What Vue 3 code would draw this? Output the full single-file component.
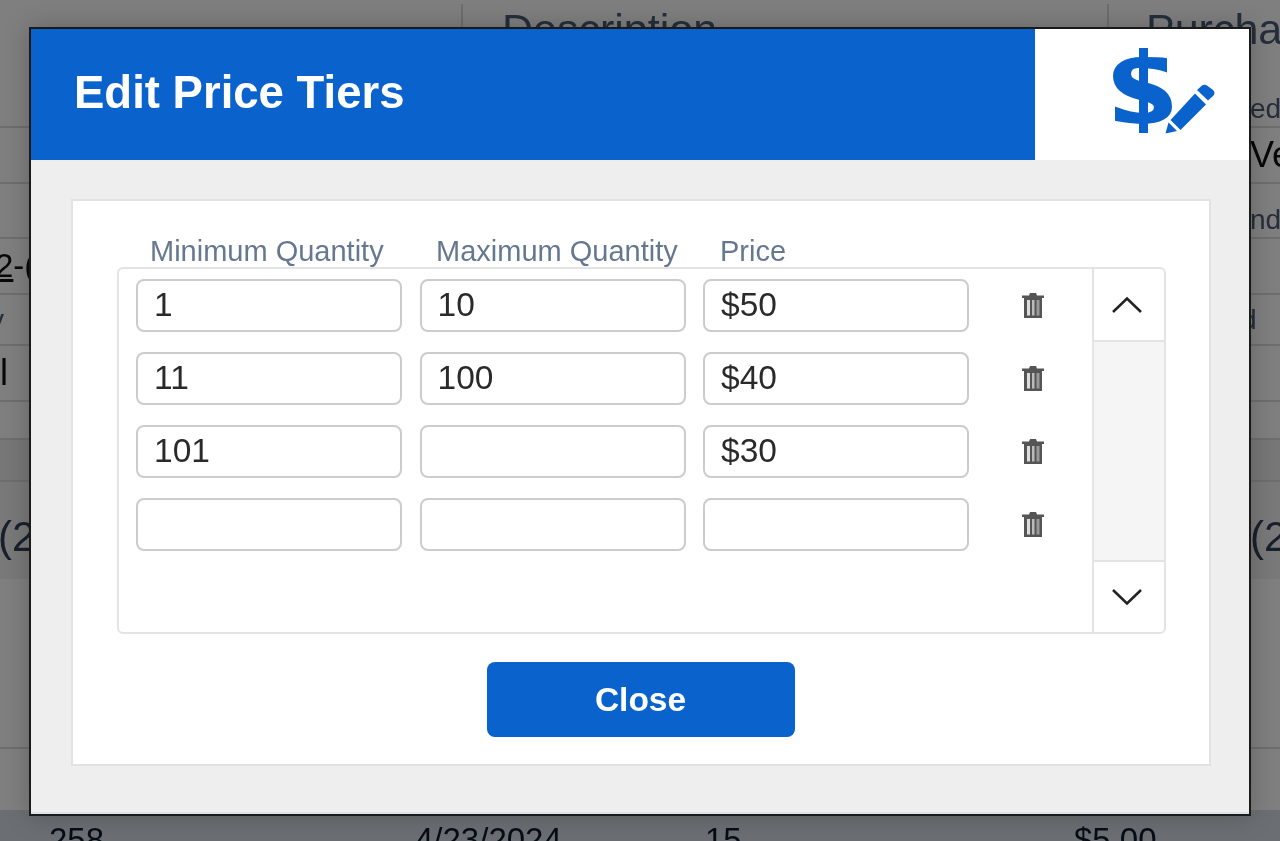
<template>
  <div class="page">
    <!-- page behind the dialog, mostly covered -->
    <div class="head-row">
      <span class="head-cell first"></span>
      <span class="head-cell">Description</span>
      <span class="head-cell last">
        Purcha
        <span class="sub ed">ed</span>
      </span>
    </div>
    <div class="row r56"><span class="dark right ve">Ve</span></div>
    <div class="row r55"><span class="sub right nd">nd</span></div>
    <div class="row r56"><span class="dark two"><u>2</u>-(</span></div>
    <div class="row r51">
      <span class="sub vee">v</span>
      <span class="sub right used">d</span>
    </div>
    <div class="row r56"><span class="dark bar">l</span></div>
    <div class="row r38"></div>
    <div class="row r41 shade"></div>
    <div class="row r97">
      <span class="big">(2</span>
      <span class="big right">(2</span>
    </div>
    <div class="row r170"></div>
    <div class="row r61"></div>
    <div class="foot-row">
      <span class="c1">258</span>
      <span class="c2">4/23/2024</span>
      <span class="c3">15</span>
      <span class="c4">$5.00</span>
    </div>

    <!-- dialog -->
    <div class="overlay"></div>
    <div class="modal">
      <div class="modal-head">
        <h1>Edit Price Tiers</h1>
        <div class="head-icon">
          <svg width="214" height="131" viewBox="1035 29 214 131">
            <path
              d="M1166 59 L1166 71 C1158 68 1148 67 1138 67 C1132 67 1130 70 1130 74 C1130 79 1135 81 1144 83 C1162 87 1171 94 1171 107 C1171 117 1160 123 1143 123 C1133 123 1122 121 1116 120 L1116 108 C1124 111 1135 114 1143 114 C1151 114 1155 111 1155 107 C1155 103 1150 101 1140 99 C1123 95 1114 88 1114 76 C1114 65 1125 58 1142 58 C1151 58 1160 58 1166 59 Z"
              fill="#0a62cc"
              stroke="#0a62cc"
              stroke-width="2"
            />
            <rect x="1139" y="48" width="9" height="85" fill="#0a62cc" />
            <path d="M1165.500 133.500 L1168.500 122.500 L1177 131 Z" fill="#0a62cc" />
            <path d="M1170.500 120 L1180.500 130 L1206 104.500 L1195 93.500 Z" fill="#0a62cc" />
            <path d="M1197 90 L1202 85.500 Q1204 84 1207 85.500 L1213 90 Q1216 93 1213 96 L1208 100.500 Z" fill="#0a62cc" />
          </svg>
        </div>
      </div>

      <div class="modal-body">
        <div class="card">
          <div class="labels">
            <span>Minimum Quantity</span>
            <span>Maximum Quantity</span>
            <span>Price</span>
          </div>

          <div class="tier-box">
            <div class="tier-list">
              <div v-for="(tier, i) in tiers" :key="i" class="tier">
                <input type="text" :value="tier.min" readonly />
                <input type="text" :value="tier.max" readonly />
                <input type="text" :value="tier.price" readonly />
                <svg class="trash" width="24" height="26" viewBox="0 0 24 26">
                  <path d="M1 3.500 H8 L9 1 H15 L16 3.500 H23 V6 H1 Z" fill="#555" />
                  <path d="M3 6 H21 V26 H3 Z" fill="#555" />
                  <rect x="6" y="8" width="3" height="15.500" fill="#ddd" />
                  <rect x="11" y="8" width="2.500" height="15.500" fill="#bbb" />
                  <rect x="15.500" y="8" width="3" height="15.500" fill="#999" />
                </svg>
              </div>
            </div>
            <div class="scroller">
              <div class="arrow up">
                <svg width="32" height="18" viewBox="0 0 32 18">
                  <path d="M2 16 L16 2.500 L30 16" fill="none" stroke="#222" stroke-width="2.500" />
                </svg>
              </div>
              <div class="track"></div>
              <div class="arrow down">
                <svg width="32" height="18" viewBox="0 0 32 18">
                  <path d="M2 2 L16 15.500 L30 2" fill="none" stroke="#222" stroke-width="2.500" />
                </svg>
              </div>
            </div>
          </div>

          <div class="actions">
            <button type="button">Close</button>
          </div>
        </div>
      </div>
    </div>
  </div>
</template>

<script setup>
const tiers = [
  { min: "1", max: "10", price: "$50" },
  { min: "11", max: "100", price: "$40" },
  { min: "101", max: "", price: "$30" },
  { min: "", max: "", price: "" },
];
</script>

<style>
html,
body {
  margin: 0;
  overflow: hidden;
}
</style>

<style scoped>
.page {
  position: relative;
  width: 1280px;
  height: 841px;
  overflow: hidden;
  background: #fff;
  font-family: "Liberation Sans", Arial, sans-serif;
  color: #111;
  filter: blur(0.45px);
}

.head-row {
  display: flex;
  box-sizing: border-box;
  height: 128px;
  border-bottom: 2px solid #ddd;
}

.head-cell {
  flex: none;
  height: 60px;
  margin-top: 4px;
  padding-left: 39px;
  border-right: 2px solid #ddd;
  font-size: 43px;
  line-height: 50px;
  color: #4a5d75;
  white-space: nowrap;
}

.head-cell.first {
  width: 422px;
}

.head-cell:nth-child(2) {
  width: 605px;
}

.head-cell.last {
  display: block;
  padding-left: 37px;
  border-right: none;
}

.ed {
  display: block;
  margin: 38px 0 0 104px;
  line-height: 34px;
}

.row {
  display: flex;
  box-sizing: border-box;
  border-bottom: 2px solid #ddd;
  align-items: center;
  white-space: nowrap;
}

.r56 {
  height: 56px;
}

.r55 {
  height: 55px;
}

.r51 {
  height: 51px;
}

.r38 {
  height: 38px;
}

.r41 {
  height: 42px;
}

.r97 {
  height: 97px;
  padding-top: 12px;
  background: #f3f3f3;
  border-bottom: none;
}

.r170 {
  height: 170px;
}

.r61 {
  height: 61px;
  border-bottom: none;
}

.shade {
  background: #eee;
}

.right {
  flex: none;
  width: 30px;
  margin-left: auto;
}

.sub {
  font-size: 28px;
  color: #4a5d75;
}

.dark {
  font-size: 33px;
  color: #111;
}

.ve {
  font-size: 36px;
}

.nd {
  padding-top: 18px;
}

.two {
  margin-left: -5px;
}

.vee {
  margin-left: -10px;
}

.used {
  width: 39px;
}

.bar {
  font-size: 36px;
}

.big {
  flex: none;
  font-size: 42px;
  color: #33415a;
  margin-left: -2px;
}

.big.right {
  margin-left: auto;
}

.foot-row {
  display: flex;
  height: 32px;
  background: #d6dee6;
  font-size: 33px;
  line-height: 60px;
  color: #0d1a2c;
  white-space: nowrap;
}

.c1 {
  flex: none;
  box-sizing: border-box;
  width: 415px;
  padding-left: 49px;
}

.c2 {
  flex: none;
  width: 290px;
}

.c3 {
  flex: none;
  width: 369px;
}

.overlay {
  position: absolute;
  inset: 0;
  background: rgba(0, 0, 0, 0.5);
}

.modal {
  position: absolute;
  left: 29px;
  top: 27px;
  width: 1222px;
  height: 789px;
  box-sizing: border-box;
  display: flex;
  flex-direction: column;
  border: 2px solid #1a1a1a;
  background: #eee;
  box-shadow: 0 0 24px rgba(0, 0, 0, 0.22);
}

.modal-head {
  display: flex;
  height: 131px;
  background: #0a62cc;
}

.modal-head h1 {
  flex: 1;
  margin: 0;
  padding-left: 43px;
  font-size: 45.500px;
  line-height: 128px;
  font-weight: 700;
  color: #fff;
}

.head-icon {
  width: 214px;
  height: 131px;
  background: #fff;
}

.head-icon svg {
  display: block;
}

.modal-body {
  flex: 1;
  padding: 39px 38px 46px 40px;
  border-bottom: 2px solid #dfe3ea;
}

.card {
  height: 100%;
  box-sizing: border-box;
  padding: 30px 43px 27px 44px;
  background: #fff;
  border: 2px solid #e2e2e2;
}

.labels {
  display: flex;
  height: 36px;
  padding-left: 33px;
  font-size: 29px;
  line-height: 40px;
  color: #66788f;
  white-space: nowrap;
}

.labels span:nth-child(1) {
  width: 286px;
}

.labels span:nth-child(2) {
  width: 284px;
}

.tier-box {
  display: flex;
  height: 367px;
  box-sizing: border-box;
  border: 2px solid #e4e4e4;
  border-radius: 6px;
  overflow: hidden;
}

.tier-list {
  flex: 1;
  display: flex;
  flex-direction: column;
  gap: 20px;
  padding: 10px 0 0 17px;
}

.tier {
  display: flex;
  align-items: center;
  gap: 17.500px;
}

.tier input {
  width: 266px;
  height: 53px;
  box-sizing: border-box;
  padding: 0 16px 2px;
  border: 2px solid #ccc;
  border-radius: 8px;
  font-family: inherit;
  font-size: 33.500px;
  color: #2a2a2a;
  outline: none;
}

.tier .trash {
  margin: -2px 0 0 34px;
}

.scroller {
  flex: none;
  width: 70px;
  display: flex;
  flex-direction: column;
  border-left: 2px solid #e4e4e4;
}

.arrow {
  display: flex;
  align-items: center;
  justify-content: center;
  height: 72px;
  box-sizing: border-box;
  padding-right: 4px;
}

.arrow.up {
  height: 73px;
  border-bottom: 2px solid #e4e4e4;
}

.arrow.down {
  border-top: 2px solid #e4e4e4;
}

.track {
  flex: 1;
  background: #f5f5f5;
}

.actions {
  display: flex;
  justify-content: center;
  margin: 28px 2px 0 0;
}

button {
  width: 308px;
  height: 75px;
  border: none;
  border-radius: 8px;
  background: #0a62cc;
  font-family: inherit;
  font-size: 33.500px;
  font-weight: 700;
  color: #fff;
}
</style>
